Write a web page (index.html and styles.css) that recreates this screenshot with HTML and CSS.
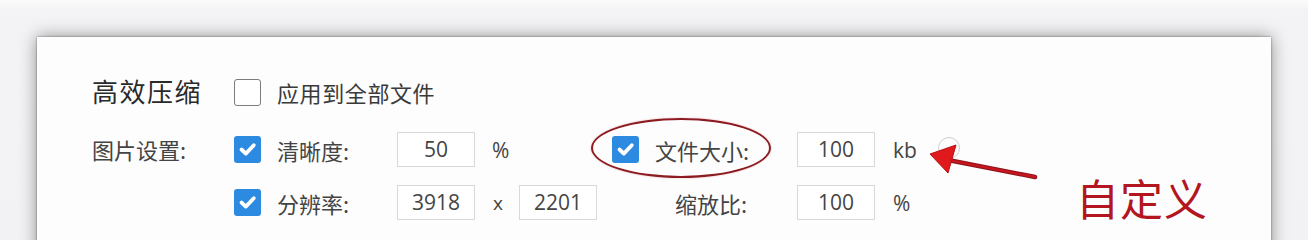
FILE: index.html
```html
<!DOCTYPE html>
<html lang="zh-CN">
<head>
<meta charset="utf-8">
<title>高效压缩</title>
<link rel="stylesheet" href="styles.css">
</head>
<body>
<div class="card">
  <div class="row row1">
    <div class="title">高效压缩</div>
    <span class="cb"></span>
    <div class="opt">应用到全部文件</div>
  </div>
  <div class="row row2">
    <div class="label">图片设置:</div>
    <span class="cb on"><svg viewBox="0 0 27 27"><path d="M7.5 13.5 L11.8 17.6 L19.8 9.2"/></svg></span>
    <div class="name">清晰度:</div>
    <div class="field">50</div>
    <div class="unit">%</div>
    <div class="gap"></div>
    <span class="cb on"><svg viewBox="0 0 27 27"><path d="M7.5 13.5 L11.8 17.6 L19.8 9.2"/></svg></span>
    <div class="name2">文件大小:</div>
    <div class="field">100</div>
    <div class="unit2">kb</div>
    <span class="help"></span>
  </div>
  <div class="row row3">
    <div class="label"></div>
    <span class="cb on"><svg viewBox="0 0 27 27"><path d="M7.5 13.5 L11.8 17.6 L19.8 9.2"/></svg></span>
    <div class="name">分辨率:</div>
    <div class="field">3918</div>
    <div class="unit x">x</div>
    <div class="field">2201</div>
    <div class="name3">缩放比:</div>
    <div class="field">100</div>
    <div class="unit2">%</div>
  </div>
</div>
<div class="ring"></div>
<svg class="arrow" viewBox="0 0 1308 240" width="1308" height="240">
  <line x1="948" y1="160" x2="1035" y2="177" stroke="#8e141a" stroke-width="4.5" stroke-linecap="round"/>
  <line x1="948" y1="160" x2="1035" y2="177" stroke="#c4161e" stroke-width="2.5" stroke-linecap="round"/>
  <polygon points="930,154 956,145 948,173" fill="#e01a1c" stroke="#b51218" stroke-width="1" stroke-linejoin="round"/>
</svg>
<div class="note">自定义</div>
</body>
</html>
```
FILE: styles.css
```css
html, body {
  margin: 0;
  padding: 0;
}
body {
  width: 1308px;
  height: 240px;
  overflow: hidden;
  background: linear-gradient(#fbfbfc 0, #f3f3f5 10px, #f2f2f4 100%);
  font-family: "Noto Sans CJK SC", "Open Sans", sans-serif;
  color: #333;
  position: relative;
}
.card {
  margin: 37px 0 0 37px;
  width: 1234px;
  height: 260px;
  background: #fdfdfd;
  box-shadow: 0 0 2px rgba(0,0,0,0.45), 0 0 16px rgba(0,0,0,0.42);
  padding-left: 55px;
  padding-top: 41px;
  box-sizing: border-box;
}
.row {
  display: flex;
  align-items: center;
}
.row1 { height: 28px; }
.row2 { height: 35px; margin-top: 26px; }
.row3 { height: 35px; margin-top: 18px; }
.title {
  width: 142px;
  font-size: 26px;
  letter-spacing: 1.5px;
  color: #2a2a2a;
  line-height: 28px;
  margin-top: -2px;
}
.label {
  width: 142px;
  font-size: 22px;
  color: #444;
  line-height: 35px;
}
.opt {
  font-size: 22px;
  letter-spacing: 0.6px;
  color: #3a3a3a;
}
.cb {
  width: 27px;
  height: 27px;
  box-sizing: border-box;
  border: 1.5px solid #7c7c7c;
  border-radius: 3px;
  background: #fff;
  margin-right: 16px;
  flex: none;
  display: flex;
}
.cb.on {
  border: none;
  background: #2c8ae0;
}
.cb svg {
  width: 27px;
  height: 27px;
}
.cb path {
  fill: none;
  stroke: #fff;
  stroke-width: 3.8;
  stroke-linecap: round;
  stroke-linejoin: round;
}
.name {
  width: 120px;
  font-size: 22px;
  color: #444;
}
.name2 {
  width: 142px;
  font-size: 22px;
  color: #444;
}
.name3 {
  width: 122px;
  padding-left: 78px;
  font-size: 22px;
  color: #444;
}
.field {
  width: 78px;
  height: 35px;
  box-sizing: border-box;
  border: 1px solid #d9d9d9;
  background: #fff;
  font-family: "Open Sans", sans-serif;
  font-size: 21px;
  color: #444;
  text-align: center;
  line-height: 32px;
  flex: none;
}
.unit {
  width: 44px;
  box-sizing: border-box;
  padding-left: 17px;
  font-family: "Open Sans", sans-serif;
  font-size: 21px;
  color: #444;
}
.unit.x {
  padding-left: 18px;
  font-size: 19px;
}
.gap { width: 93px; }
.unit2 {
  margin-left: 18px;
  font-family: "Open Sans", sans-serif;
  font-size: 21px;
  color: #444;
}
.help {
  width: 20px;
  height: 20px;
  border: 1.5px solid #cfcfcf;
  border-radius: 50%;
  margin-left: 21px;
  margin-top: -4px;
}
.ring {
  position: absolute;
  left: 591px;
  top: 118px;
  width: 180px;
  height: 60px;
  box-sizing: border-box;
  border: 2.5px solid #8c1b22;
  border-radius: 50%;
  box-shadow: 0 0 2px rgba(200,40,40,0.35);
}
.arrow {
  position: absolute;
  left: 0;
  top: 0;
}
.note {
  position: absolute;
  left: 1076px;
  top: 172px;
  font-size: 43px;
  line-height: 50px;
  color: #b3161f;
  letter-spacing: 1px;
}
```
